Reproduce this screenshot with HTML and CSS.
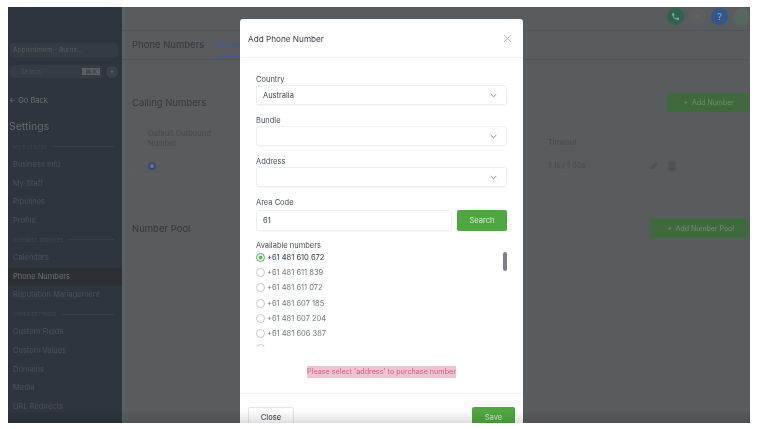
FILE: index.html
```html
<!DOCTYPE html>
<html lang="en">
<head>
    <meta charset="UTF-8">
    <title>Phone Numbers</title>
    <link rel="stylesheet" href="styles.css">
</head>
<body>
    <div class="frame">
        <div class="app">
            <aside class="sidebar">
                <div class="account">Appointment - Burns...</div>
                <div class="search-row">
                    <div class="search">
                        <span>Search</span>
                        <b>⌘ K</b>
                    </div>
                    <span class="plus-dot">+</span>
                </div>
                <div class="back">← Go Back</div>
                <div class="settings">Settings</div>
                <div class="section"><span>MY BUSINESS</span></div>
                <a>Business Info</a>
                <a>My Staff</a>
                <a>Pipelines</a>
                <a>Profile</a>
                <div class="section"><span>BUSINESS SERVICES</span></div>
                <a>Calendars</a>
                <a class="active">Phone Numbers</a>
                <a>Reputation Management</a>
                <div class="section"><span>OTHER SETTINGS</span></div>
                <a>Custom Fields</a>
                <a>Custom Values</a>
                <a>Domains</a>
                <a>Media</a>
                <a>URL Redirects</a>
            </aside>
            <section class="content">
                <div class="topbar">
                    <span class="dot dot-phone">
                        <svg width="9" height="9" viewBox="0 0 24 24"><path fill="#8fa89c" d="M6.6 10.8c1.4 2.8 3.8 5.100 6.600 6.600l2.200-2.200c.3-.3.700-.4 1-.2 1.100.4 2.300.6 3.600.6.600 0 1 .4 1 1V20c0 .6-.4 1-1 1C10.600 21 3 13.400 3 4c0-.6.400-1 1-1h3.500c.6 0 1 .4 1 1 0 1.300.2 2.500.6 3.600.1.300 0 .7-.2 1z"/></svg>
                    </span>
                    <span class="dot dot-mute">
                        <svg width="9" height="9" viewBox="0 0 9 9"><path d="M2 7l5-5M2 2l5 5" stroke="#666a67" stroke-width="1" fill="none"/></svg>
                    </span>
                    <span class="dot dot-help">?</span>
                    <span class="dot dot-user"></span>
                </div>
                <div class="tabs">
                    <h2>Phone Numbers</h2>
                    <span class="tab">Manage</span>
                </div>
                <div class="block-head head-calling">
                    <h3>Calling Numbers</h3>
                    <span class="add-btn">+&nbsp;&nbsp;Add Number</span>
                </div>
                <div class="card">
                    <div class="col-default">
                        <p>Default Outbound<br>Number</p>
                        <span class="radio-dim"></span>
                    </div>
                    <div class="col-timeout">
                        <p>Timeout</p>
                        <p class="timeout-val">1 1s / 1 60s</p>
                    </div>
                    <div class="row-icons">
                        <svg width="10" height="10" viewBox="0 0 10 10"><path d="M1 9l1-3 5-5 2 2-5 5z" fill="#4e5254"/></svg>
                        <svg width="8" height="10" viewBox="0 0 8 10"><path d="M1 2h6v7H1zM0 1h8" fill="#4e5254" stroke="#4e5254"/></svg>
                    </div>
                </div>
                <div class="block-head head-pool">
                    <h3>Number Pool</h3>
                    <span class="add-btn">+&nbsp;&nbsp;Add Number Pool</span>
                </div>
            </section>
        </div>

        <div class="modal">
            <header class="modal-head">
                <span>Add Phone Number</span>
                <svg width="9" height="9" viewBox="0 0 9 9"><path d="M1 1l7 7M8 1L1 8" stroke="#a8adb3" stroke-width="0.8" fill="none"/></svg>
            </header>
            <div class="modal-body">
                <div class="field">
                    <label>Country</label>
                    <div class="select">
                        <span>Australia</span>
                        <svg class="chev" width="7" height="5" viewBox="0 0 7 5"><path d="M.7 1l2.800 2.800L6.300 1" stroke="#6b7280" stroke-width="0.8" fill="none"/></svg>
                    </div>
                </div>
                <div class="field">
                    <label>Bundle</label>
                    <div class="select">
                        <span></span>
                        <svg class="chev" width="7" height="5" viewBox="0 0 7 5"><path d="M.7 1l2.800 2.800L6.300 1" stroke="#6b7280" stroke-width="0.8" fill="none"/></svg>
                    </div>
                </div>
                <div class="field">
                    <label>Address</label>
                    <div class="select">
                        <span></span>
                        <svg class="chev" width="7" height="5" viewBox="0 0 7 5"><path d="M.7 1l2.800 2.800L6.300 1" stroke="#6b7280" stroke-width="0.8" fill="none"/></svg>
                    </div>
                </div>
                <div class="field">
                    <label class="label-area">Area Code</label>
                    <div class="area-row">
                        <div class="select area-input">61</div>
                        <span class="search-btn">Search</span>
                    </div>
                </div>
                <div class="numbers">
                    <label>Available numbers</label>
                    <div class="number-list">
                        <div class="num selected"><i></i>+61 481 610 672</div>
                        <div class="num"><i></i>+61 481 611 839</div>
                        <div class="num"><i></i>+61 481 611 072</div>
                        <div class="num"><i></i>+61 481 607 185</div>
                        <div class="num"><i></i>+61 481 607 204</div>
                        <div class="num"><i></i>+61 481 606 387</div>
                        <div class="num"><i></i></div>
                        <span class="thumb"></span>
                    </div>
                </div>
                <p class="warning"><mark>Please select 'address' to purchase number</mark></p>
            </div>
            <footer class="modal-foot">
                <span class="close-btn">Close</span>
                <span class="save-btn">Save</span>
            </footer>
        </div>
        <div class="bottom-fade"></div>
    </div>
</body>
</html>
```

FILE: styles.css
```css
* {
    box-sizing: border-box;
}
html, body {
    margin: 0;
    height: 429px;
    overflow: hidden;
    background: #fff;
    font-family: Inter, "Liberation Sans", sans-serif;
}
.frame {
    position: relative;
    width: 742px;
    height: 416px;
    margin: 7px 0 0 8px;
    overflow: hidden;
    background: #585c5e;
}
.app {
    display: flex;
    height: 100%;
    filter: blur(0.6px);
}

/* left menu */
.sidebar {
    width: 114px;
    flex: none;
    display: flex;
    flex-direction: column;
    background: #2f353d;
    color: #4b5158;
    font-size: 7.5px;
}
.account {
    margin: 36px 4px 0 2px;
    height: 14px;
    line-height: 14px;
    padding-left: 3px;
    background: #353b42;
    border-radius: 3px;
    color: #555b61;
    font-size: 6.5px;
}
.search-row {
    display: flex;
    align-items: center;
    gap: 4px;
    margin: 8px 4px 0 2px;
}
.search {
    flex: 1;
    height: 13px;
    display: flex;
    align-items: center;
    justify-content: space-between;
    padding: 0 2px 0 11px;
    background: #353b42;
    border-radius: 3px;
    font-size: 6px;
}
.search b {
    background: #585e64;
    color: #30363d;
    padding: 0 3px;
    font-weight: 400;
}
.plus-dot {
    width: 12px;
    height: 12px;
    line-height: 12px;
    border-radius: 50%;
    background: #3a4047;
    text-align: center;
    color: #5b6167;
}
.back {
    margin: 16px 0 0 1px;
    height: 14px;
    line-height: 14px;
    color: #6a6f74;
    font-size: 7.5px;
}
.settings {
    margin: 11px 0 2.500px 1px;
    height: 16px;
    line-height: 16px;
    color: #666b70;
    font-size: 10.5px;
}
.section {
    display: flex;
    align-items: center;
    gap: 6px;
    height: 18.6px;
    padding: 0 8px 0 5px;
    color: #41474e;
    font-size: 5px;
}
.section::after {
    content: "";
    flex: 1;
    height: 1px;
    background: #393f46;
}
.sidebar a {
    display: block;
    height: 18.6px;
    line-height: 18.6px;
    padding-left: 5px;
}
.sidebar a.active {
    background: #2c3034;
    color: #6c7175;
}

/* page behind the dialog */
.content {
    flex: 1;
    padding-right: 2px;
    color: #36393b;
    background: linear-gradient(to right, #5c6166 0, #585c5e 6px);
}
.topbar {
    height: 24px;
    display: flex;
    justify-content: flex-end;
    align-items: center;
    gap: 5px;
    padding: 0 0 4px;
    border-bottom: 1px solid #515557;
}
.dot {
    width: 17px;
    height: 17px;
    border-radius: 50%;
    display: flex;
    align-items: center;
    justify-content: center;
    font-size: 9px;
    color: #9aa7bb;
}
.dot-phone { background: #2f6350; }
.dot-mute { background: #5b5f5e; }
.dot-help { background: #33578a; }
.dot-user { background: #56675e; margin-right: -2px; }
.tabs {
    height: 29px;
    display: flex;
    align-items: flex-end;
    gap: 11px;
    padding-left: 10px;
    border-bottom: 1px solid #515557;
}
.tabs h2 {
    margin: 0 0 9px;
    font-size: 9.5px;
    font-weight: 400;
}
.tab {
    height: 18px;
    margin-bottom: 2px;
    line-height: 12px;
    border-bottom: 1px solid #46598c;
    color: #46598c;
    font-size: 7.5px;
    white-space: nowrap;
}
.block-head {
    display: flex;
    justify-content: space-between;
    align-items: center;
    padding-left: 10px;
}
.block-head h3 {
    margin: 0;
    font-size: 9.5px;
    font-weight: 400;
}
.head-calling { margin-top: 33px; height: 19px; }
.head-pool { margin-top: 43px; height: 20px; }
.add-btn {
    height: 100%;
    display: flex;
    align-items: center;
    padding: 0 14px 0 17px;
    background: #3f6a3e;
    border-radius: 1px;
    color: #6f8f6d;
    font-size: 7px;
}
.card {
    position: relative;
    height: 50px;
    margin: 13px 0 0 11px;
    border: 1px solid #5a5e60;
    color: #474b4d;
    font-size: 7.5px;
    line-height: 9.5px;
}
.card p {
    margin: 0;
}
.col-default {
    position: absolute;
    left: 14px;
    top: 3px;
}
.radio-dim {
    display: block;
    width: 8px;
    height: 8px;
    margin-top: 14px;
    border: 2px solid #3a4a78;
    border-radius: 50%;
    background: #6b7180;
}
.col-timeout {
    position: absolute;
    left: 414px;
    top: 12px;
}
.timeout-val {
    padding-top: 13px;
}
.row-icons {
    position: absolute;
    left: 515px;
    top: 35px;
    display: flex;
    gap: 9px;
}

/* dialog */
.modal {
    position: absolute;
    left: 232px;
    top: 12px;
    width: 283px;
    height: 420px;
    background: #fff;
    border-radius: 3px;
    color: #3a3f45;
    filter: blur(0.3px);
}
.modal-head {
    height: 39px;
    display: flex;
    align-items: center;
    justify-content: space-between;
    padding: 1px 11px 0 8px;
    border-bottom: 1px solid #f1f2f3;
    font-size: 8.2px;
}
.modal-body {
    padding: 16px 16px 0;
}
.field {
    display: flex;
    flex-direction: column;
    margin-bottom: 10px;
}
.field label, .numbers label {
    height: 11px;
    line-height: 12px;
    font-size: 7.5px;
    color: #4a4f55;
}
.field .label-area {
    height: 13px;
}
.select {
    height: 20px;
    display: flex;
    align-items: center;
    justify-content: space-between;
    padding: 0 9px 0 6px;
    border: 1px solid #eceef0;
    border-radius: 3px;
    font-size: 7.5px;
    color: #3f444a;
    box-shadow: 0 1px 1px rgba(0, 0, 0, 0.03);
}
.area-row {
    display: flex;
    gap: 5px;
}
.area-input {
    flex: 1;
    height: 21px;
}
.search-btn {
    width: 50px;
    height: 21px;
    line-height: 21px;
    text-align: center;
    background: #4fa83f;
    border-radius: 2px;
    color: #d6ecd2;
    font-size: 7.5px;
}
.numbers {
    margin-top: 10px;
}
.numbers label {
    display: block;
    height: 9px;
    line-height: 10px;
}
.number-list {
    position: relative;
    height: 97px;
    overflow: hidden;
}
.num {
    height: 15.2px;
    display: flex;
    align-items: center;
    gap: 2px;
    font-size: 7.5px;
    color: #74797e;
}
.num i {
    width: 9px;
    height: 9px;
    flex: none;
    border: 1px solid #c4c7ca;
    border-radius: 50%;
}
.num.selected {
    color: #33383d;
}
.num.selected i {
    border-color: #63c576;
    background: #57c26c;
    box-shadow: inset 0 0 0 1.5px #fff;
}
.thumb {
    position: absolute;
    right: 0;
    top: 2px;
    width: 4px;
    height: 19px;
    border-radius: 2px;
    background: #7d8186;
}
.warning {
    margin: 19px 0 0;
    height: 12px;
    text-align: center;
    font-size: 7.2px;
    line-height: 12px;
}
.warning mark {
    display: inline-block;
    background: #eec4d4;
    color: #d2607f;
    white-space: nowrap;
}
.modal-foot {
    display: flex;
    justify-content: space-between;
    align-items: flex-start;
    margin-top: 15px;
    padding: 13px 8px 0;
    border-top: 1px solid #f1f2f3;
    font-size: 7.5px;
}
.close-btn {
    width: 46px;
    height: 22px;
    line-height: 20px;
    text-align: center;
    border: 1px solid #e4e5e7;
    border-radius: 2px;
    color: #4a4f55;
    font-weight: 500;
}
.save-btn {
    width: 43px;
    height: 22px;
    line-height: 22px;
    text-align: center;
    background: #4fa83f;
    border-radius: 2px;
    color: #d6ecd2;
}
.bottom-fade {
    position: absolute;
    left: 0;
    right: 0;
    bottom: 0;
    height: 13px;
    background: linear-gradient(to bottom, rgba(0, 0, 0, 0), rgba(0, 0, 0, 0.12));
}
```
